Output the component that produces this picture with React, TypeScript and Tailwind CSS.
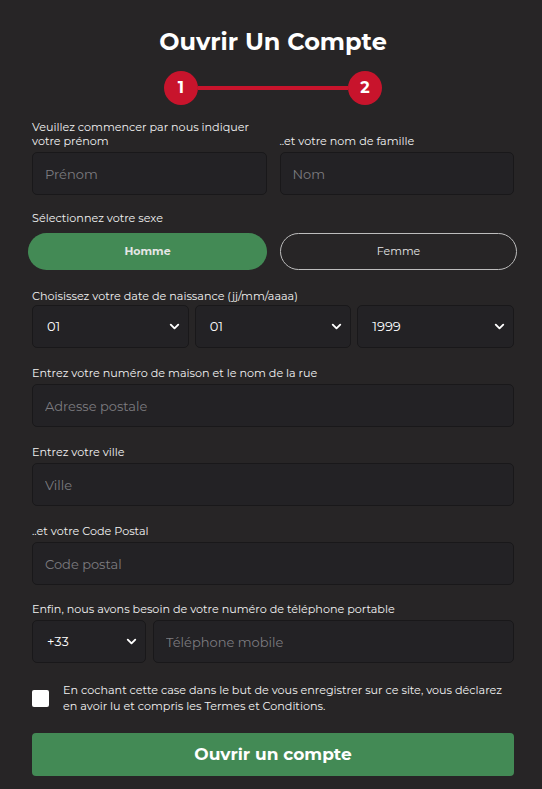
import React from "react";
import { ChevronDown } from "lucide-react";

function Label({ children }: { children: React.ReactNode }) {
  return <div className="text-[11.2px] leading-[14px] text-[#f2f2f2]">{children}</div>;
}

function TextInput({ placeholder, className = "" }: { placeholder: string; className?: string }) {
  return (
    <input
      className={`h-[43px] rounded-[5px] border border-[#19181a] bg-[#232225] px-3 text-[13px] text-white placeholder:text-[#7d7c80] outline-none ${className}`}
      placeholder={placeholder}
    />
  );
}

function Select({ value, className = "" }: { value: string; className?: string }) {
  return (
    <div
      className={`flex h-[43px] items-center justify-between rounded-[5px] border border-[#19181a] bg-[#232225] pl-[14px] pr-[6px] text-[13px] text-white ${className}`}
    >
      <span>{value}</span>
      <ChevronDown size={15} strokeWidth={3} className="text-white" />
    </div>
  );
}

export default function App() {
  return (
    <div
      className="min-h-[789px] w-[542px] bg-[#272526] pl-8 pr-7 pt-[27px] text-white"
      style={{ fontFamily: "Montserrat, Inter, 'Noto Sans', sans-serif" }}
    >
      <h1 className="text-center text-[24px] font-bold leading-[29px]">Ouvrir Un Compte</h1>

      {/* stepper */}
      <div className="mt-[15px] flex items-center justify-center">
        <div className="flex h-[34px] w-[34px] items-center justify-center rounded-full bg-[#c8142c] text-[16px] font-bold">
          1
        </div>
        <div className="h-[4px] w-[150px] bg-[#c8142c]" />
        <div className="flex h-[34px] w-[34px] items-center justify-center rounded-full bg-[#c8142c] text-[16px] font-bold">
          2
        </div>
      </div>

      {/* name */}
      <div className="mt-[15px] grid grid-cols-2 gap-[13px]">
        <div className="flex flex-col">
          <Label>
            Veuillez commencer par nous indiquer
            <br />
            votre prénom
          </Label>
          <TextInput placeholder="Prénom" className="mt-[4px]" />
        </div>
        <div className="flex flex-col justify-end">
          <Label>..et votre nom de famille</Label>
          <TextInput placeholder="Nom" className="mt-[4px]" />
        </div>
      </div>

      {/* gender */}
      <div className="mt-[16px]">
        <Label>Sélectionnez votre sexe</Label>
        <div className="-ml-1 -mr-[3px] mt-[8px] flex gap-[13px]">
          <button className="h-[37px] w-[239px] rounded-full bg-[#438a55] text-[11px] font-bold text-[#e6e6e6]">
            Homme
          </button>
          <button className="h-[37px] flex-1 rounded-full border border-[#bdbdbd] text-[11px] text-[#e6e6e6]">
            Femme
          </button>
        </div>
      </div>

      {/* birth date */}
      <div className="mt-[19px]">
        <Label>Choisissez votre date de naissance (jj/mm/aaaa)</Label>
        <div className="mt-[2px] grid grid-cols-3 gap-[6px]">
          <Select value="01" />
          <Select value="01" />
          <Select value="1999" />
        </div>
      </div>

      <div className="mt-[18px] flex flex-col">
        <Label>Entrez votre numéro de maison et le nom de la rue</Label>
        <TextInput placeholder="Adresse postale" className="mt-[4px]" />
      </div>

      <div className="mt-[18px] flex flex-col">
        <Label>Entrez votre ville</Label>
        <TextInput placeholder="Ville" className="mt-[4px]" />
      </div>

      <div className="mt-[18px] flex flex-col">
        <Label>..et votre Code Postal</Label>
        <TextInput placeholder="Code postal" className="mt-[4px]" />
      </div>

      <div className="mt-[17px] flex flex-col">
        <Label>Enfin, nous avons besoin de votre numéro de téléphone portable</Label>
        <div className="mt-[4px] flex gap-[7px]">
          <Select value="+33" className="w-[114px] shrink-0" />
          <TextInput placeholder="Téléphone mobile" className="min-w-0 flex-1" />
        </div>
      </div>

      {/* terms */}
      <div className="mt-[19px] flex items-center gap-[14px]">
        <div className="h-[17px] w-[17px] shrink-0 rounded-[2px] bg-white" />
        <p className="text-[11.2px] leading-[16px] text-[#f2f2f2]">
          En cochant cette case dans le but de vous enregistrer sur ce site, vous déclarez en avoir lu et
          compris les Termes et Conditions.
        </p>
      </div>

      <button className="mt-[19px] h-[43px] w-full rounded-[4px] bg-[#438a55] text-[17px] font-bold text-white">
        Ouvrir un compte
      </button>
    </div>
  );
}
